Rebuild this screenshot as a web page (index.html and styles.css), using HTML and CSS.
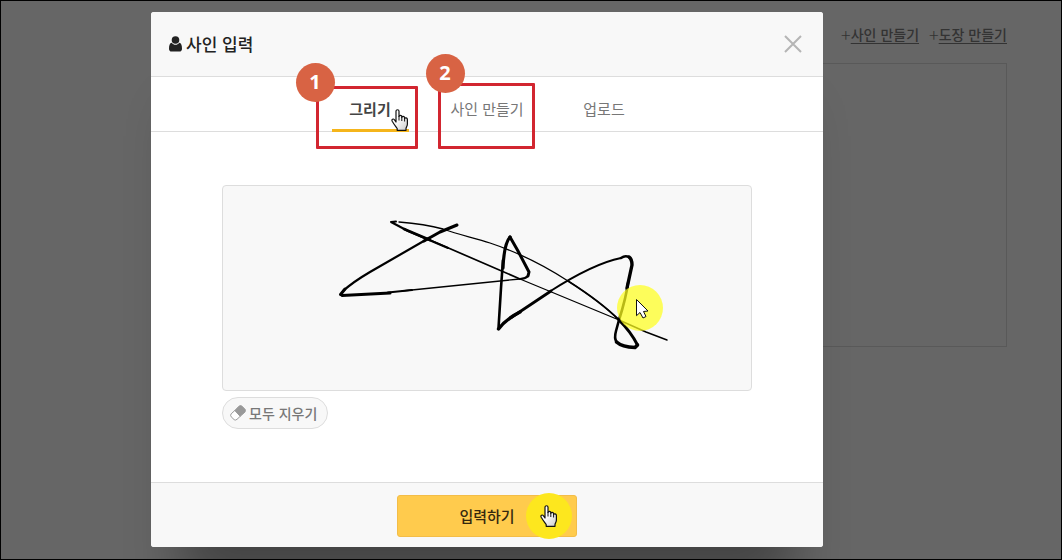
FILE: index.html
```
<!DOCTYPE html>
<html lang="ko">
<head>
<meta charset="utf-8">
<meta name="viewport" content="width=device-width, initial-scale=1">
<title>사인 입력</title>
<link rel="stylesheet" href="styles.css">
</head>
<body>
<svg class="defs" aria-hidden="true">
  <defs>
    <linearGradient id="glove" x1="0" y1="0" x2="1" y2="1">
      <stop offset="0.4" stop-color="#fff"/>
      <stop offset="1" stop-color="#ccc"/>
    </linearGradient>
    <symbol id="hand" viewBox="0 0 18 22">
      <path d="M5 13V2.3C5 .2 8 .2 8 2.3V7.5C8.2 5.9 10.7 6 10.8 7.6V8.3C11.2 6.9 13.4 7.1 13.6 8.6V9.4C14.2 8.3 16.4 8.8 16.4 10.5V15C16.4 17 15.2 18 15 19.5V21.3H6.2V19.5C4.8 17.5 3.1 15.4 1.2 12.2C.1 10.2 2.4 9.3 3.5 10.8L5 13Z" fill="url(#glove)" stroke="#111" stroke-width="1.2" stroke-linejoin="round"/>
      <path d="M8 7V11.5M10.8 8V12M13.6 9V12.5" stroke="#111" fill="none"/>
    </symbol>
  </defs>
</svg>

<div class="page">
  <main class="background">
    <nav class="links">
      <span class="link"><span class="plus">+</span><a href="#sign">사인 만들기</a></span>
      <span class="link"><span class="plus">+</span><a href="#stamp">도장 만들기</a></span>
    </nav>
    <div class="list"></div>
  </main>

  <div class="overlay">
    <form class="modal" role="dialog" aria-labelledby="title">
      <header class="modal-header">
        <svg class="user" viewBox="0 0 13 16" aria-hidden="true">
          <circle cx="6.5" cy="4" r="3.8"/>
          <path d="M2.8 6.8C3.8 8.2 5 8.8 6.5 8.8S9.2 8.2 10.2 6.8C12.4 7.1 13 9.6 13 12.7C13 14.5 12 15.6 10.4 15.6H2.6C1 15.6 0 14.5 0 12.7C0 9.6.6 7.1 2.8 6.8Z"/>
        </svg>
        <h1 id="title">사인 입력</h1>
        <button class="close" type="button" aria-label="닫기">
          <svg viewBox="0 0 18 18"><path d="M1 1L17 17M17 1L1 17"/></svg>
        </button>
      </header>

      <div class="tabs" role="tablist">
        <div class="tab-item">
          <button class="tab active" type="button" role="tab" aria-selected="true">그리기</button>
          <div class="mark mark-draw"><span class="step">1</span></div>
          <svg class="hand hand-tab" aria-hidden="true"><use href="#hand"/></svg>
        </div>
        <div class="tab-item">
          <button class="tab" type="button" role="tab" aria-selected="false">사인 만들기</button>
          <div class="mark mark-make"><span class="step">2</span></div>
        </div>
        <div class="tab-item">
          <button class="tab" type="button" role="tab" aria-selected="false">업로드</button>
        </div>
      </div>

      <div class="modal-body">
        <div class="pad">
          <svg class="signature" viewBox="223 186 528 204" role="img" aria-label="서명">
            <g fill="none" stroke="#000" stroke-linecap="round" stroke-linejoin="round">
              <path stroke-width="1.3" d="M399 222Q425 224 443 229C460 235 475 238 490 243C520 253 548 268 568 281C590 295 607 308 619 320"/>
              <path stroke-width="1.8" d="M568 281C590 295 607 308 619 320"/>
              <path stroke-width="3" d="M619 320Q631 332 637.5 345"/>
              <path stroke-width="3.6" d="M637.5 345L635 347.5Q622 347 616.5 342"/>
              <path stroke-width="2.6" d="M616.5 342Q614 338 616 331L619 320"/>
              <path stroke-width="2.6" d="M619 320Q626 298 628 283"/>
              <path stroke-width="3.4" d="M627 288L632 265Q632 259 629 257"/>
              <path stroke-width="2.4" d="M629 257Q625 255 621 258"/>
              <path stroke-width="1.8" d="M621 258C601 262 577 274 549 292"/>
              <path stroke-width="2.8" d="M551 291L512 317"/>
              <path stroke-width="3.4" d="M520 312Q506 319 498.5 329"/>
              <path stroke-width="2.6" d="M498.5 328L501 288L503 260"/>
              <path stroke-width="3.2" d="M503 268Q504 244 510 237"/>
              <path stroke-width="3" d="M510 237L518 251L529 272L528 276"/>
              <path stroke-width="2.2" d="M528 276Q525 279 520 279"/>
              <path stroke-width="1.3" d="M520 279L402 291"/>
              <path stroke-width="2" d="M412 290L388 292.5"/>
              <path stroke-width="3" d="M390 293L342 295.5"/>
              <path stroke-width="3" d="M340.5 294.5L345 289"/>
              <path stroke-width="2.2" d="M343 291Q353 282 370 272L429 238"/>
              <path stroke-width="3" d="M424 241L440 232L457 225"/>
              <path stroke-width="2" d="M391 222L396 221.5M391 222L408 231L448 248"/>
              <path stroke-width="2.6" d="M404 229L430 240"/>
              <path stroke-width="1.7" d="M430 240L520 279"/>
              <path stroke-width="1.3" d="M520 279L619 320"/>
              <path stroke-width="1.5" d="M619 320L646 332L667 340"/>
            </g>
            <circle cx="640" cy="308" r="23" fill="#ffff1f" fill-opacity=".72"/>
            <path d="M636.5 299.5V315.7L640 312.5L643 318L646 316.5L643.5 311.5L648 311Z" fill="#fff" stroke="#111"/>
          </svg>
        </div>
        <button class="clear" type="button">
          <svg viewBox="0 0 16 16" aria-hidden="true">
            <path d="M9 1.2Q10.500 0 12 1.2L15 4.3Q16 5.8 14.8 7.2L10.2 11.3L4.8 5.5Z" fill="#999" stroke="#999"/>
            <path d="M4.8 5.5L1.2 8.8Q0 10.3 1.2 11.8L4.2 14.7Q5.5 15.6 7 14.3L10.2 11.3Z" fill="#fff" stroke="#999"/>
          </svg>
          모두 지우기
        </button>
      </div>

      <footer class="modal-footer">
        <button class="submit" type="submit">입력하기
          <span class="spot"><svg class="hand" aria-hidden="true"><use href="#hand"/></svg></span>
        </button>
      </footer>
    </form>
  </div>
</div>
</body>
</html>
```
FILE: styles.css
```
* {
  box-sizing: border-box;
}

body {
  margin: 0;
  font-family: "Noto Sans CJK KR", "Noto Sans", sans-serif;
  font-size: 15px;
  line-height: 24px;
  color: #333;
}

button {
  margin: 0;
  padding: 0;
  border: 0;
  background: none;
  font: inherit;
  color: inherit;
  cursor: pointer;
}

svg {
  display: block;
}

.defs {
  position: absolute;
  width: 0;
  height: 0;
}

.page {
  position: relative;
  min-height: 100vh;
  border: 1px solid #000;
  background: #666;
  overflow: hidden;
}

.background {
  padding: 21px 54px 0 400px;
}

.links {
  display: flex;
  justify-content: flex-end;
  gap: 10px;
  font-size: 14px;
  font-weight: 500;
  color: #333;
}

.link {
  display: flex;
}

.plus {
  font-size: 18px;
  font-weight: 300;
}

.links a {
  color: inherit;
  text-underline-offset: 3px;
}

.list {
  height: 284px;
  margin-top: 17px;
  border: 1px solid #595959;
}

.overlay {
  position: absolute;
  inset: 0;
  padding: 11px 238px 12px 150px;
}

.modal {
  display: flex;
  flex-direction: column;
  border-radius: 3px;
  background: #fff;
  box-shadow: 0 70px 50px -29px rgba(0, 0, 0, 0.33);
}

.modal-header {
  display: flex;
  align-items: center;
  gap: 4px;
  height: 65px;
  padding: 0 21px 0 18px;
  border-bottom: 1px solid #ddd;
  border-radius: 3px 3px 0 0;
  background: #f8f8f8;
}

.modal-header h1 {
  margin: 0;
  font-size: 17px;
  font-weight: 500;
  color: #222;
}

.user {
  width: 13px;
  height: 16px;
  fill: #222;
}

.close {
  margin-left: auto;
}

.close svg {
  width: 18px;
  height: 18px;
  fill: none;
  stroke: #b5b5b5;
  stroke-width: 2;
}

.tabs {
  display: flex;
  justify-content: center;
  gap: 40px;
  border-bottom: 1px solid #ddd;
}

.tab-item {
  position: relative;
  width: 77px;
  margin-bottom: -1px;
}

.tab {
  width: 100%;
  height: 55px;
  padding-top: 12px;
  border-bottom: 3px solid transparent;
  color: #777;
  white-space: nowrap;
}

.tab.active {
  border-color: #f5b51b;
  font-weight: 700;
  color: #444;
}

.mark {
  position: absolute;
  border: 3px solid #d22630;
  border-radius: 1px;
  pointer-events: none;
}

.mark-draw {
  top: 9px;
  left: -16px;
  width: 102px;
  height: 63px;
}

.mark-make {
  top: 6px;
  left: -11px;
  width: 97px;
  height: 66px;
}

.step {
  position: absolute;
  top: -26px;
  left: -23px;
  width: 39px;
  height: 39px;
  border-radius: 50%;
  background: #d86344;
  font-family: "Open Sans", "Noto Sans", sans-serif;
  font-size: 20px;
  font-weight: 700;
  line-height: 38px;
  text-align: center;
  color: #fff;
}

.mark-make .step {
  top: -32px;
  left: -15px;
}

.hand {
  width: 18px;
  height: 22px;
}

.hand-tab {
  position: absolute;
  top: 32px;
  left: 59px;
}

.modal-body {
  padding: 53px 71px;
}

.pad {
  border: 1px solid #ddd;
  border-radius: 4px;
  background: #f8f8f8;
}

.signature {
  width: 100%;
}

.clear {
  display: flex;
  align-items: center;
  gap: 3px;
  height: 32px;
  margin-top: 6px;
  padding: 0 10px 0 7px;
  border: 1px solid #ddd;
  border-radius: 16px;
  background: #f8f8f8;
  font-size: 14px;
  font-weight: 500;
  color: #777;
}

.clear svg {
  width: 16px;
  height: 16px;
}

.modal-footer {
  display: flex;
  justify-content: center;
  padding: 12px 0 10px;
  border-top: 1px solid #ddd;
  border-radius: 0 0 3px 3px;
  background: #f8f8f8;
}

.submit {
  position: relative;
  width: 180px;
  height: 42px;
  border: 1px solid #f3bd48;
  border-radius: 3px;
  background: #ffcb4d;
  font-weight: 500;
  color: #35280f;
}

.spot {
  position: absolute;
  top: -3px;
  right: 4px;
  display: grid;
  place-items: center;
  width: 46px;
  height: 46px;
  border-radius: 50%;
  background: #fde71e;
}
```
